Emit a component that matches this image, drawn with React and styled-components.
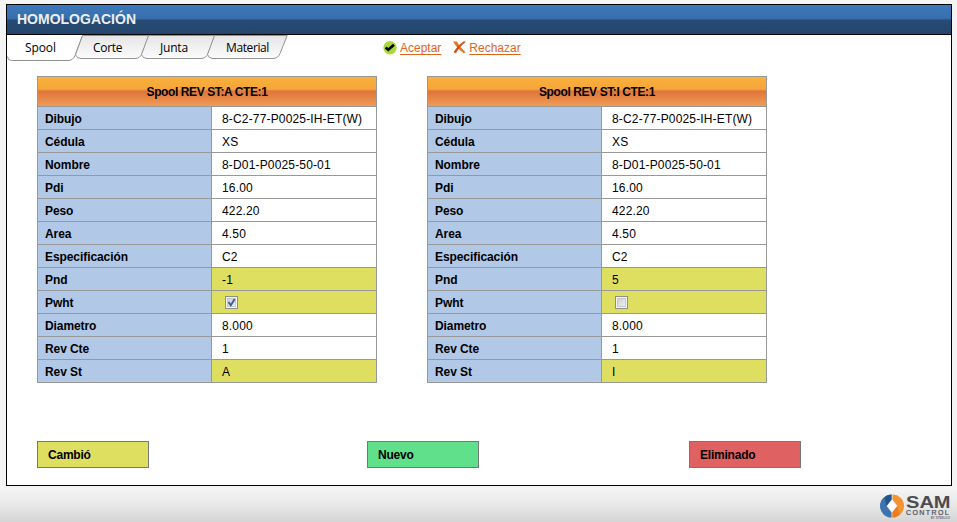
import React from "react";
import styled, { createGlobalStyle } from "styled-components";

const GlobalStyle = createGlobalStyle`
  * { box-sizing: border-box; }
  body {
    margin: 0;
    font: 12px/15px "Liberation Sans", Arial, sans-serif;
    color: #000;
    background: #f4f4f4;
  }
`;

const Page = styled.div`
  display: flex;
  flex-direction: column;
  height: 522px;
  overflow: hidden;
  padding: 4px 5px 0 6px;
  background: linear-gradient(#f4f4f4 0, #f4f4f4 490px, #e7e6e6 507px, #d5d5d5 522px);
`;

const Panel = styled.main`
  height: 482px;
  flex: none;
  border: 1px solid #000;
  background: #fff;
`;

const TitleBar = styled.header`
  height: 30px;
  padding-left: 10px;
  border-bottom: 1px solid #000;
  background: linear-gradient(#3c79bb 0, #376fad 13px, #346aa4 14px, #274b74 15px, #24466c 29px);
`;

const Title = styled.h1`
  margin: 0;
  font-size: 14px;
  line-height: 28px;
  font-weight: bold;
  color: #eee;
`;

const Toolbar = styled.div`
  display: flex;
  height: 26px;
`;

const TabStrip = styled.nav`
  display: flex;
  width: 376px;
`;

const Tab = styled.div`
  position: relative;
  flex: none;
  width: ${(p) => p.$width}px;
  height: 26px;
  padding-left: ${(p) => p.$indent}px;
  font: 12px/26px "Open Sans", "Noto Sans", sans-serif;
  letter-spacing: ${(p) => p.$spacing}px;
  white-space: nowrap;
`;

const TabShape = styled.svg`
  position: absolute;
  left: 0;
  top: 0;
  overflow: visible;
`;

const TabLabel = styled.span`
  position: relative;
`;

const Action = styled.div`
  display: flex;
  align-items: flex-start;
  gap: 3px;
  padding-top: 6px;
  margin-right: ${(p) => p.$after || 0}px;
`;

const ActionLink = styled.a`
  color: #e0651b;
  line-height: 15px;
  text-decoration: underline;
  text-underline-offset: 2px;
`;

const Comparison = styled.section`
  display: flex;
  gap: 50px;
  padding: 15px 30px 0;
`;

const SpoolTable = styled.table`
  width: 340px;
  height: 307px;
  table-layout: fixed;
  border-collapse: separate;
  border-spacing: 0;
  border-right: 1px solid #989898;
  border-bottom: 1px solid #989898;
`;

const Heading = styled.th`
  height: 30px;
  padding: 2px 0 0 0;
  letter-spacing: -0.4px;
  border: solid #989898;
  border-width: 1px 0 0 1px;
  background: linear-gradient(#fab03a 0, #f5a63b 12px, #ef963b 13px, #df743b 14px, #e88a48 22px, #ee9c57 29px);
`;

const LabelCell = styled.th`
  width: 174px;
  height: 23px;
  padding: 2px 0 0 7px;
  letter-spacing: -0.08px;
  text-align: left;
  border: solid #989898;
  border-width: 1px 0 0 1px;
  background: #b1c8e7;
`;

const ValueCell = styled.td`
  height: 23px;
  padding: 2px 0 0 10px;
  letter-spacing: 0.16px;
  border: solid #989898;
  border-width: 1px 0 0 1px;
  background: ${(p) => (p.$changed ? "#dede60" : "#fff")};
`;

const CheckBox = styled.span`
  display: flex;
  width: 13px;
  height: 13px;
  margin: -1px 0 0 3px;
  border: 1px solid #8b8d8f;
  background: linear-gradient(135deg, #c3c7cb, #f8f8f8);
  box-shadow: inset 0 0 0 1px #f5f5f5, inset 0 0 0 2px #c5c8cb;
`;

const Legend = styled.section`
  display: grid;
  grid-template-columns: 330px 322px 112px;
  padding: 58px 30px 0;
`;

const LegendItem = styled.div`
  width: 112px;
  height: 27px;
  padding-left: 10px;
  border: 1px solid #777;
  background: ${(p) => p.$color};
  font-weight: bold;
  line-height: 26px;
  letter-spacing: -0.22px;
`;

const Footer = styled.footer`
  display: flex;
  justify-content: flex-end;
  gap: 2px;
  padding: 8px 0 0;
`;

const Brand = styled.div`
  display: flex;
  flex-direction: column;
  width: 46px;
  padding-top: 2px;
  color: #4c4c4f;
`;

const BrandName = styled.div`
  height: 14px;
  font: bold 17px/14px "Liberation Sans", Arial, sans-serif;
  transform: scaleX(1.18);
  transform-origin: left;
`;

const BrandSub = styled.div`
  height: 6px;
  font: 7px/6px "Liberation Sans", Arial, sans-serif;
  letter-spacing: 1.4px;
  -webkit-text-stroke: 0.2px #4c4c4f;
`;

const BrandOwner = styled.div`
  height: 4px;
  font: bold 3px/4px "Liberation Sans", Arial, sans-serif;
  color: #77777a;
  padding-right: 2px;
  text-align: right;
`;

const tabs = [
  { label: "Spool", width: 68, indent: 18, rise: 75, spacing: -0.1, active: true },
  { label: "Corte", width: 66, indent: 18, rise: 74, spacing: -0.3 },
  { label: "Junta", width: 66, indent: 19, rise: 74, spacing: -0.2 },
  { label: "Material", width: 74, indent: 19, rise: 80, spacing: -0.4 },
];

const spools = [
  { title: "Spool REV ST:A CTE:1", pnd: "-1", pwht: true, rev: "A" },
  { title: "Spool REV ST:I CTE:1", pnd: "5", pwht: false, rev: "I" },
];

function TabItem({ tab }) {
  const { rise: r, active } = tab;
  const d = active
    ? `M0.5 21.5Q0.5 25.5 4.5 25.5H${r - 14}Q${r - 9} 25.5 ${r - 7} 20.5L${r + 0.5} 0.5`
    : `M0.5 19.5Q1.5 23.5 6 23.5H${r - 14}Q${r - 9} 23.5 ${r - 7} 18.5L${r + 0.2} 0.5H7.5Z`;
  return (
    <Tab $width={tab.width} $indent={tab.indent} $spacing={tab.spacing}>
      <TabShape width={r + 1} height="26">
        <defs>
          <linearGradient id="tabFill" x2="0" y2="1">
            <stop stopColor="#e5e5e5" />
            <stop offset="1" stopColor="#fcfcfc" />
          </linearGradient>
        </defs>
        <path d={d} fill={active ? "#fff" : "url(#tabFill)"} stroke="#929292" />
      </TabShape>
      <TabLabel>{tab.label}</TabLabel>
    </Tab>
  );
}

function AcceptIcon() {
  return (
    <svg width="14" height="14" viewBox="0 0 14 14">
      <circle cx="7" cy="6.7" r="6.7" fill="#a9d838" />
      <path d="M2.6 6.4L5.3 8.8L10.9 3.8" fill="none" stroke="#000" strokeWidth="2.7" />
    </svg>
  );
}

function RejectIcon() {
  return (
    <svg width="13" height="14" viewBox="0 0 13 14">
      <path d="M0 0.5L3.8 0.5Q6.5 5.5 12.5 11.3L10.8 12.2Q4.5 8 0 0.5Z" fill="#e8751c" />
      <path d="M13 0.8L10.8 0.3Q5 4 0.5 11.3L3 12.2Q6.5 5.5 13 0.8Z" fill="#c9571a" />
    </svg>
  );
}

function LogoMark() {
  return (
    <svg width="24" height="24" viewBox="0 0 24 24">
      <path d="M11.5 .5A11.5 11.5 0 0 0 11.5 23.5V18.5L6.5 12L11.5 5.5Z" fill="#3d74ae" />
      <path d="M11.5 .5A11.5 11.5 0 0 0 4.5 3.3L6.5 12L11.5 5.5Z" fill="#1f5692" />
      <path d="M12.5 .5A11.5 11.5 0 0 1 12.5 23.5V18.5L17.5 12L12.5 5.5Z" fill="#f39432" />
      <path d="M12.5 23.5A11.5 11.5 0 0 0 19.5 20.7L17.5 12L12.5 18.5Z" fill="#e97c1c" />
      <path d="M12 6.5L16.5 12L12 17.5L7.5 12Z" fill="#fff" />
    </svg>
  );
}

function Spool({ spool }) {
  const rows = [
    ["Dibujo", "8-C2-77-P0025-IH-ET(W)"],
    ["Cédula", "XS"],
    ["Nombre", "8-D01-P0025-50-01"],
    ["Pdi", "16.00"],
    ["Peso", "422.20"],
    ["Area", "4.50"],
    ["Especificación", "C2"],
    ["Pnd", spool.pnd, true],
    ["Pwht", spool.pwht, true],
    ["Diametro", "8.000"],
    ["Rev Cte", "1"],
    ["Rev St", spool.rev, true],
  ];
  return (
    <SpoolTable>
      <colgroup>
        <col width="174" />
        <col />
      </colgroup>
      <thead>
        <tr>
          <Heading colSpan={2}>{spool.title}</Heading>
        </tr>
      </thead>
      <tbody>
        {rows.map(([label, value, changed]) => (
          <tr key={label}>
            <LabelCell>{label}</LabelCell>
            <ValueCell $changed={changed}>
              {typeof value === "boolean" ? (
                <CheckBox role="checkbox" aria-checked={value}>
                  {value && (
                    <svg width="11" height="11" viewBox="0 0 11 11">
                      <path d="M2.5 5L4.8 8.2L8.7 2" fill="none" stroke="#3f5b98" strokeWidth="1.9" />
                    </svg>
                  )}
                </CheckBox>
              ) : (
                value
              )}
            </ValueCell>
          </tr>
        ))}
      </tbody>
    </SpoolTable>
  );
}

export default function App() {
  return (
    <>
      <GlobalStyle />
      <Page>
        <Panel>
          <TitleBar>
            <Title>HOMOLOGACIÓN</Title>
          </TitleBar>
          <Toolbar>
            <TabStrip>
              {tabs.map((tab) => (
                <TabItem key={tab.label} tab={tab} />
              ))}
            </TabStrip>
            <Action $after={12}>
              <AcceptIcon />
              <ActionLink>Aceptar</ActionLink>
            </Action>
            <Action>
              <RejectIcon />
              <ActionLink>Rechazar</ActionLink>
            </Action>
          </Toolbar>
          <Comparison>
            {spools.map((spool) => (
              <Spool key={spool.title} spool={spool} />
            ))}
          </Comparison>
          <Legend>
            <LegendItem $color="#dede60">Cambió</LegendItem>
            <LegendItem $color="#60e08b">Nuevo</LegendItem>
            <LegendItem $color="#df6161">Eliminado</LegendItem>
          </Legend>
        </Panel>
        <Footer>
          <LogoMark />
          <Brand>
            <BrandName>SAM</BrandName>
            <BrandSub>CONTROL</BrandSub>
            <BrandOwner>BY STEELGO</BrandOwner>
          </Brand>
        </Footer>
      </Page>
    </>
  );
}
